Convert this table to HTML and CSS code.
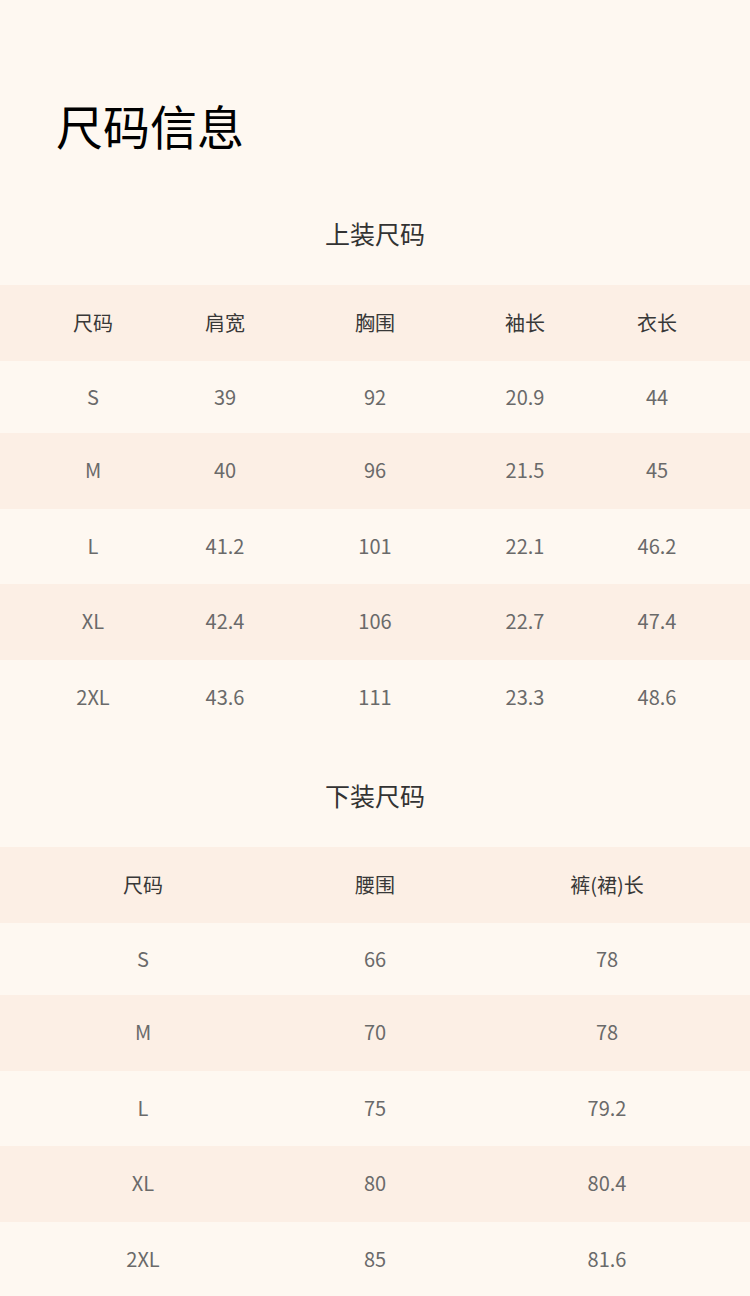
FILE: index.html
```html
<!DOCTYPE html>
<html lang="zh-CN">
<head>
<meta charset="utf-8">
<title>尺码信息</title>
<link rel="stylesheet" href="styles.css">
</head>
<body>
<main class="page">
  <h1 class="page-title">尺码信息</h1>

  <section class="section">
    <h2 class="section-title">上装尺码</h2>
    <div class="table table-top">
      <div class="row head"><span>尺码</span><span>肩宽</span><span>胸围</span><span>袖长</span><span>衣长</span></div>
      <div class="row first"><span>S</span><span>39</span><span>92</span><span>20.9</span><span>44</span></div>
      <div class="row alt"><span>M</span><span>40</span><span>96</span><span>21.5</span><span>45</span></div>
      <div class="row"><span>L</span><span>41.2</span><span>101</span><span>22.1</span><span>46.2</span></div>
      <div class="row alt"><span>XL</span><span>42.4</span><span>106</span><span>22.7</span><span>47.4</span></div>
      <div class="row"><span>2XL</span><span>43.6</span><span>111</span><span>23.3</span><span>48.6</span></div>
    </div>
  </section>

  <section class="section">
    <h2 class="section-title">下装尺码</h2>
    <div class="table table-bottom">
      <div class="row head"><span>尺码</span><span>腰围</span><span>裤(裙)长</span></div>
      <div class="row first"><span>S</span><span>66</span><span>78</span></div>
      <div class="row alt"><span>M</span><span>70</span><span>78</span></div>
      <div class="row"><span>L</span><span>75</span><span>79.2</span></div>
      <div class="row alt"><span>XL</span><span>80</span><span>80.4</span></div>
      <div class="row"><span>2XL</span><span>85</span><span>81.6</span></div>
    </div>
  </section>
</main>
</body>
</html>
```

FILE: styles.css
```css
html, body {
  margin: 0;
  padding: 0;
  background: #fef8f1;
}

body {
  font-family: "Noto Sans CJK SC", "Noto Sans", sans-serif;
  width: 750px;
  height: 1296px;
  overflow: hidden;
}

.page {
  display: flex;
  flex-direction: column;
}

.page-title {
  margin: 0;
  padding: 95px 0 18px 56px;
  font-size: 47px;
  line-height: 60px;
  font-weight: 400;
  color: #000;
}

.section {
  display: flex;
  flex-direction: column;
  padding-top: 35px;
}

.section-title {
  margin: 0 0 27px;
  font-size: 25px;
  line-height: 50px;
  font-weight: 400;
  text-align: center;
  color: #333;
}

.table {
  display: flex;
  flex-direction: column;
}

.row {
  box-sizing: border-box;
  display: grid;
  align-items: center;
  height: 75.5px;
  padding-bottom: 2px;
  font-size: 20px;
  color: #6a6a6a;
}

.table-top .row {
  grid-template-columns: 186px 78px 222px 78px 186px;
}

.table-bottom .row {
  grid-template-columns: 286px 178px 286px;
}

.row span {
  text-align: center;
  white-space: nowrap;
}

.row.head {
  height: 76px;
  background: #fcefe5;
  color: #383838;
}

.row.first {
  height: 72px;
}

.row.alt {
  background: #fcefe5;
}
```
